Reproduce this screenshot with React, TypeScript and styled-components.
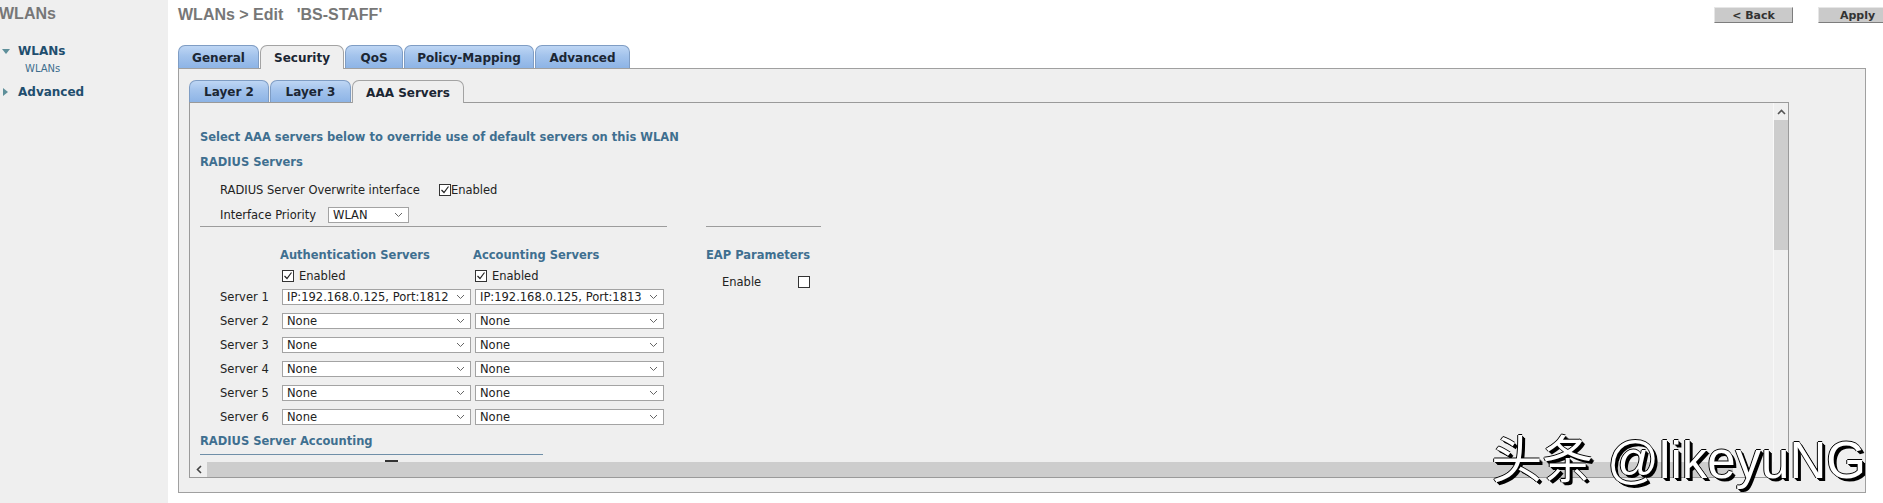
import React from "react";
import styled, { createGlobalStyle } from "styled-components";

const GlobalStyle = createGlobalStyle`
  html, body { margin: 0; padding: 0; background: #ffffff; overflow: hidden; }
  body { font-family: "DejaVu Sans", Verdana, sans-serif; color: #222; }
  * { box-sizing: border-box; }
`;

const Page = styled.div`
  position: relative;
  display: flex;
  width: 1883px;
  height: 503px;
  overflow: hidden;
`;

const Sidebar = styled.nav`
  width: 168px;
  flex: none;
  background: #efefef;
  display: flex;
  flex-direction: column;
`;

const SidebarTitle = styled.div`
  font-family: "Liberation Sans", Arial, sans-serif;
  font-weight: bold;
  font-size: 16px;
  line-height: 20px;
  color: #777;
  padding-top: 4px;
  margin-left: -1px;
`;

const MenuItem = styled.div<{ $top: number }>`
  display: flex;
  align-items: center;
  height: 16px;
  margin-top: ${(p) => p.$top}px;
  font-size: 12px;
  font-weight: bold;
  color: #1f4e6e;
`;

const ArrowSlot = styled.span`
  width: 18px;
  display: flex;
  align-items: center;
  padding-left: 2px;
`;

const TriDown = styled.span`
  width: 0;
  height: 0;
  border-left: 4px solid transparent;
  border-right: 4px solid transparent;
  border-top: 5px solid #5e8f9a;
`;

const TriRight = styled.span`
  width: 0;
  height: 0;
  margin-left: 1px;
  border-top: 4px solid transparent;
  border-bottom: 4px solid transparent;
  border-left: 5px solid #5e8f9a;
`;

const SubItem = styled.div`
  margin-top: 3px;
  padding-left: 25px;
  font-size: 10px;
  line-height: 14px;
  color: #3d6d8d;
`;

const Main = styled.main`
  flex: 1;
  padding-left: 10px;
  display: flex;
  flex-direction: column;
`;

const Header = styled.header`
  height: 45px;
  display: flex;
  justify-content: space-between;
  align-items: flex-start;
`;

const PageTitle = styled.h1`
  margin: 0;
  padding-top: 5px;
  font-family: "Liberation Sans", Arial, sans-serif;
  font-weight: bold;
  font-size: 16px;
  line-height: 20px;
  color: #777;
  white-space: pre;
`;

const ButtonGroup = styled.div`
  display: flex;
  gap: 25px;
  margin-top: 7px;
  margin-right: -14px;
`;

const Button = styled.button`
  width: 79px;
  height: 16px;
  padding: 0;
  background: #cacaca;
  border: 1px solid;
  border-color: #e6e6e6 #7d7d7d #7d7d7d #e6e6e6;
  font-family: "DejaVu Sans", Verdana, sans-serif;
  font-size: 11px;
  font-weight: bold;
  color: #333;
  line-height: 13px;
`;

const TabRow = styled.div<{ $h: number }>`
  display: flex;
  gap: 1px;
  height: ${(p) => p.$h}px;
  position: relative;
  z-index: 1;
`;

const Tab = styled.div<{ $active?: boolean; $w: number; $h: number }>`
  width: ${(p) => p.$w}px;
  height: ${(p) => (p.$active ? p.$h + 1 : p.$h)}px;
  display: flex;
  align-items: center;
  justify-content: center;
  border: 1px solid ${(p) => (p.$active ? "#a3a3a3" : "#7f9dc4")};
  border-bottom: none;
  border-radius: 7px 7px 0 0;
  background: ${(p) =>
    p.$active ? "#efefef" : "linear-gradient(#bed6f4 0%, #a3c3ec 45%, #8db4e6 100%)"};
  font-size: 12px;
  font-weight: bold;
  color: #1b2633;
  padding-top: 1px;
`;

const Panel = styled.section`
  width: 1688px;
  height: 425px;
  border: 1px solid #a0a0a0;
  background: #efefef;
  padding: 11px 0 0 10px;
  display: flex;
  flex-direction: column;
`;

const ScrollBox = styled.div`
  width: 1600px;
  height: 376px;
  border: 1px solid #9a9a9a;
  background: #efefef;
  display: grid;
  grid-template-columns: 1fr 15px;
  grid-template-rows: 1fr 15px;
`;

const Content = styled.div`
  overflow: hidden;
  padding: 27px 0 0 10px;
  display: flex;
  flex-direction: column;
  font-size: 11.5px;
`;

const VScroll = styled.div`
  display: flex;
  flex-direction: column;
  background: #efefef;
  border-left: 1px solid #f8f8f8;
`;

const ScrollArrow = styled.div`
  height: 17px;
  display: flex;
  align-items: center;
  justify-content: center;
`;

const VThumb = styled.div`
  height: 130px;
  background: #cdcdcd;
`;

const HScroll = styled.div`
  display: flex;
  align-items: stretch;
  background: #efefef;
`;

const HArrow = styled.div`
  width: 17px;
  display: flex;
  align-items: center;
  justify-content: center;
`;

const HThumb = styled.div`
  width: 1526px;
  background: #cdcdcd;
`;

const Corner = styled.div`
  background: #efefef;
`;

const Heading = styled.div<{ $top: number }>`
  margin-top: ${(p) => p.$top}px;
  font-size: 11.5px;
  font-weight: bold;
  line-height: 14px;
  color: #3f6f90;
  white-space: nowrap;
`;

const FormRow = styled.div<{ $top: number; $gap: number }>`
  display: flex;
  align-items: center;
  gap: ${(p) => p.$gap}px;
  height: 20px;
  margin-top: ${(p) => p.$top}px;
  padding-left: 20px;
  font-size: 11.5px;
  white-space: nowrap;
`;

const CheckLabel = styled.label<{ $gap: number }>`
  display: inline-flex;
  align-items: center;
  gap: ${(p) => p.$gap}px;
  font-size: 11.5px;
  color: #222;
  white-space: nowrap;
`;

const Box = styled.span`
  width: 12px;
  height: 12px;
  border: 1px solid #333;
  background: #fff;
  display: inline-flex;
  align-items: center;
  justify-content: center;
  flex: none;
`;

const SelectBox = styled.div<{ $w: number }>`
  width: ${(p) => p.$w}px;
  height: 16px;
  border: 1px solid #a3a3a3;
  background: #fff;
  display: flex;
  align-items: center;
  justify-content: space-between;
  padding: 0 5px 0 4px;
  font-size: 11.5px;
  color: #222;
  white-space: nowrap;
  overflow: hidden;
`;

const Columns = styled.div`
  display: flex;
  gap: 39px;
  margin-top: 2px;
`;

const LeftCol = styled.div`
  width: 467px;
  border-top: 1px solid #9c9c9c;
  padding-top: 21px;
`;

const RightCol = styled.div`
  width: 115px;
  border-top: 1px solid #9c9c9c;
  padding-top: 21px;
`;

const ServerGrid = styled.div`
  display: grid;
  grid-template-columns: 58px 189px 189px;
  column-gap: 4px;
  row-gap: 8px;
  padding-left: 20px;
  align-items: center;
`;

const GridHead = styled.div`
  font-size: 11.5px;
  font-weight: bold;
  line-height: 14px;
  color: #3f6f90;
  white-space: nowrap;
  margin-left: -2px;
  margin-bottom: -1px;
`;

const GridCheck = styled.div`
  height: 16px;
  display: flex;
  align-items: center;
  margin-top: -1px;
  margin-bottom: -3px;
`;

const ServerLabel = styled.div`
  font-size: 11.5px;
  color: #222;
  white-space: nowrap;
`;

const EapRow = styled.div`
  display: flex;
  align-items: center;
  justify-content: space-between;
  width: 88px;
  margin-left: 16px;
  margin-top: 13px;
  height: 14px;
  font-size: 11.5px;
  color: #222;
`;

const Rule = styled.div<{ $w: number; $top: number }>`
  width: ${(p) => p.$w}px;
  margin-top: ${(p) => p.$top}px;
  border-top: 1px solid #6f8fa8;
`;

const Peek = styled.div`
  width: 13px;
  height: 2px;
  margin: 5px 0 0 185px;
  background: #333;
`;

const Watermark = styled.div`
  position: absolute;
  right: 17px;
  bottom: 14px;
  font-family: "Liberation Sans", "Noto Sans CJK SC", sans-serif;
  font-size: 51px;
  line-height: 56px;
  color: #ffffff;
  white-space: nowrap;
  text-shadow: 1px 1px 0 #000, 2px 2px 0 #000, 3px 3px 0 #000, -1px 0 0 #000, 0 -1px 0 #000;
  pointer-events: none;
`;

const Chevron = () => (
  <svg width="9" height="6" viewBox="0 0 9 6">
    <polyline points="1,1 4.5,4.5 8,1" fill="none" stroke="#666" strokeWidth="1" />
  </svg>
);

const Check = ({ checked }: { checked?: boolean }) => (
  <Box>
    {checked && (
      <svg width="10" height="10" viewBox="0 0 10 10">
        <polyline points="1.5,5 4,7.5 8.5,1.5" fill="none" stroke="#222" strokeWidth="1.2" />
      </svg>
    )}
  </Box>
);

const Select = ({ value, w }: { value: string; w: number }) => (
  <SelectBox $w={w}>
    <span>{value}</span>
    <Chevron />
  </SelectBox>
);

const servers = [
  ["IP:192.168.0.125, Port:1812", "IP:192.168.0.125, Port:1813"],
  ["None", "None"],
  ["None", "None"],
  ["None", "None"],
  ["None", "None"],
  ["None", "None"],
];

export default function App() {
  return (
    <>
      <GlobalStyle />
      <Page>
        <Sidebar>
          <SidebarTitle>WLANs</SidebarTitle>
          <MenuItem $top={19}>
            <ArrowSlot>
              <TriDown />
            </ArrowSlot>
            WLANs
          </MenuItem>
          <SubItem>WLANs</SubItem>
          <MenuItem $top={8}>
            <ArrowSlot>
              <TriRight />
            </ArrowSlot>
            Advanced
          </MenuItem>
        </Sidebar>
        <Main>
          <Header>
            <PageTitle>{"WLANs > Edit   'BS-STAFF'"}</PageTitle>
            <ButtonGroup>
              <Button>&lt; Back</Button>
              <Button>Apply</Button>
            </ButtonGroup>
          </Header>
          <TabRow $h={23}>
            <Tab $w={81} $h={23}>General</Tab>
            <Tab $w={84} $h={23} $active>Security</Tab>
            <Tab $w={58} $h={23}>QoS</Tab>
            <Tab $w={130} $h={23}>Policy-Mapping</Tab>
            <Tab $w={95} $h={23}>Advanced</Tab>
          </TabRow>
          <Panel>
            <TabRow $h={22}>
              <Tab $w={80} $h={22}>Layer 2</Tab>
              <Tab $w={81} $h={22}>Layer 3</Tab>
              <Tab $w={112} $h={22} $active>AAA Servers</Tab>
            </TabRow>
            <ScrollBox>
              <Content>
                <Heading $top={0}>
                  Select AAA servers below to override use of default servers on this WLAN
                </Heading>
                <Heading $top={11}>RADIUS Servers</Heading>
                <FormRow $top={11} $gap={19}>
                  <span>RADIUS Server Overwrite interface</span>
                  <CheckLabel $gap={0}>
                    <Check checked />
                    Enabled
                  </CheckLabel>
                </FormRow>
                <FormRow $top={6} $gap={12}>
                  <span>Interface Priority</span>
                  <Select value="WLAN" w={81} />
                </FormRow>
                <Columns>
                  <LeftCol>
                    <ServerGrid>
                      <span />
                      <GridHead>Authentication Servers</GridHead>
                      <GridHead>Accounting Servers</GridHead>
                      <span />
                      <GridCheck>
                        <CheckLabel $gap={5}>
                          <Check checked />
                          Enabled
                        </CheckLabel>
                      </GridCheck>
                      <GridCheck>
                        <CheckLabel $gap={5}>
                          <Check checked />
                          Enabled
                        </CheckLabel>
                      </GridCheck>
                      {servers.map((s, i) => (
                        <React.Fragment key={i}>
                          <ServerLabel>Server {i + 1}</ServerLabel>
                          <Select value={s[0]} w={189} />
                          <Select value={s[1]} w={189} />
                        </React.Fragment>
                      ))}
                    </ServerGrid>
                  </LeftCol>
                  <RightCol>
                    <Heading $top={0}>EAP Parameters</Heading>
                    <EapRow>
                      <span>Enable</span>
                      <Check />
                    </EapRow>
                  </RightCol>
                </Columns>
                <Heading $top={9}>RADIUS Server Accounting</Heading>
                <Rule $w={343} $top={6} />
                <Peek />
              </Content>
              <VScroll>
                <ScrollArrow>
                  <svg width="9" height="6" viewBox="0 0 9 6">
                    <polyline points="1,5 4.5,1.5 8,5" fill="none" stroke="#555" strokeWidth="1.6" />
                  </svg>
                </ScrollArrow>
                <VThumb />
              </VScroll>
              <HScroll>
                <HArrow>
                  <svg width="6" height="9" viewBox="0 0 6 9">
                    <polyline points="5,1 1.5,4.5 5,8" fill="none" stroke="#444" strokeWidth="1.6" />
                  </svg>
                </HArrow>
                <HThumb />
              </HScroll>
              <Corner />
            </ScrollBox>
          </Panel>
        </Main>
        <Watermark>头条 @likeyuNG</Watermark>
      </Page>
    </>
  );
}
